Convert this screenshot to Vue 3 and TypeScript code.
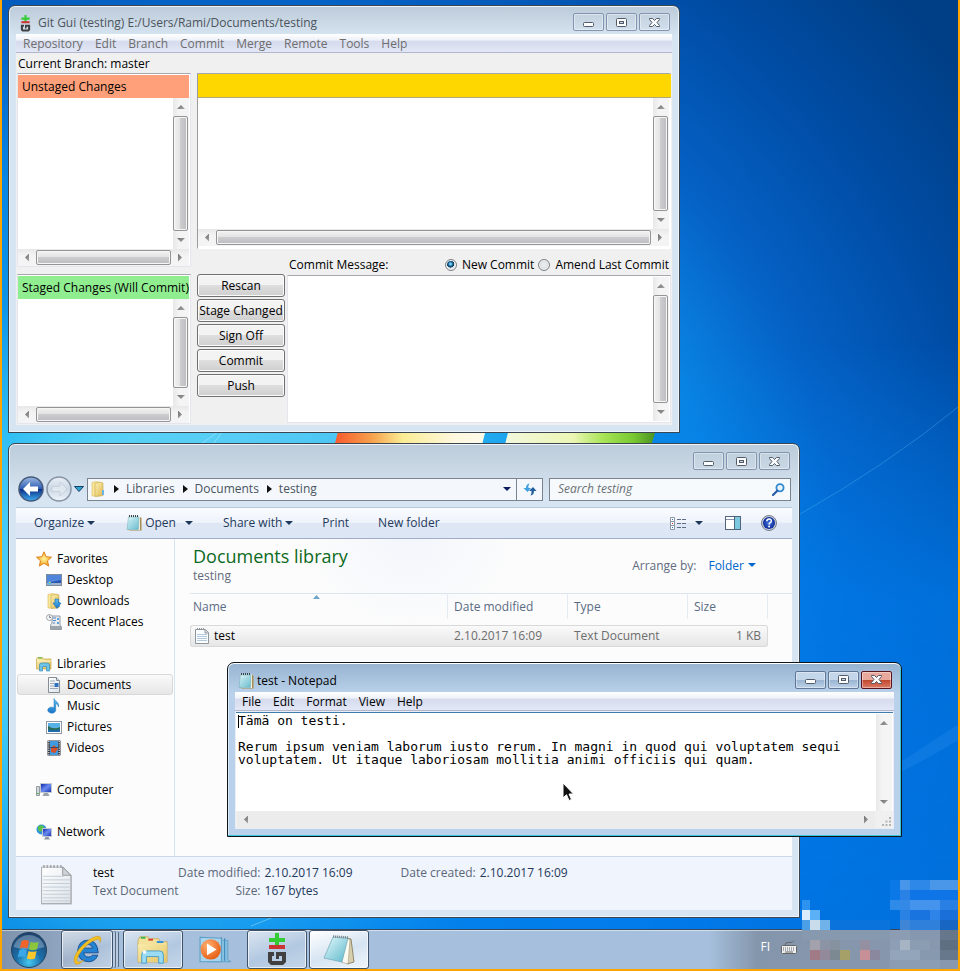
<script setup lang="ts">
import { ref } from 'vue'

interface NavItem { label: string; icon: string; selected?: boolean }
interface NavGroup { head: NavItem; items: NavItem[] }

const gitMenus = ['Repository', 'Edit', 'Branch', 'Commit', 'Merge', 'Remote', 'Tools', 'Help']
const gitActions = ['Rescan', 'Stage Changed', 'Sign Off', 'Commit', 'Push']
const noteMenus = ['File', 'Edit', 'Format', 'View', 'Help']
const captions = [
  { name: 'Minimize', icon: 'cap-min' },
  { name: 'Maximize', icon: 'cap-max' },
  { name: 'Close', icon: 'cap-close' },
]
const crumbs = ['Libraries', 'Documents', 'testing']

const nav: NavGroup[] = [
  {
    head: { label: 'Favorites', icon: 'star' },
    items: [
      { label: 'Desktop', icon: 'desktop' },
      { label: 'Downloads', icon: 'downloads' },
      { label: 'Recent Places', icon: 'recent' },
    ],
  },
  {
    head: { label: 'Libraries', icon: 'libraries' },
    items: [
      { label: 'Documents', icon: 'document', selected: true },
      { label: 'Music', icon: 'music' },
      { label: 'Pictures', icon: 'pictures' },
      { label: 'Videos', icon: 'videos' },
    ],
  },
  { head: { label: 'Computer', icon: 'computer' }, items: [] },
  { head: { label: 'Network', icon: 'network' }, items: [] },
]

const commitMode = ref('new')
const commitMessage = ref('')
const search = ref('')
const noteText = ref(
  'Tämä on testi.\n\nRerum ipsum veniam laborum iusto rerum. In magni in quod qui voluptatem sequi\nvoluptatem. Ut itaque laboriosam mollitia animi officiis qui quam.',
)

/* Mosaic tiles over the clock corner: column, row, width in tiles, colour. */
const tiles: [number, number, number, string][] = [
  [0, 0, 1, '#2d93f0'], [0, 1, 1, '#d9ecfb'], [1, 1, 1, '#5cb0f5'],
  [0, 2, 1, '#4a9fe6'], [1, 2, 1, '#c9dcec'], [2, 2, 1, '#6fb3ea'], [3, 2, 6, '#0a74dc'],
  [9, -2, 1, '#0b78e8'], [10, -2, 1, '#4796e9'], [11, -2, 2, '#2e88e8'], [13, -2, 2, '#4a97ea'],
  [9, -1, 1, '#0b78e8'], [10, -1, 1, '#2a82e6'], [11, -1, 4, '#0f74e6'],
  [9, 0, 1, '#2f8bea'], [10, 0, 1, '#3488e6'], [11, 0, 3, '#4493ec'], [14, 0, 1, '#2a7fe4'],
  [10, 1, 1, '#2a82e4'], [11, 1, 2, '#1a74e0'], [13, 1, 1, '#2e84e8'], [14, 1, 1, '#1a70d8'],
  [10, 2, 1, '#3f87d6'], [11, 2, 3, '#2f80da'], [14, 2, 1, '#1766c4'],
  [0, 3, 9, '#8799af'], [9, 3, 2, '#8c9db3'], [11, 3, 3, '#8598b0'], [14, 3, 1, '#66768b'],
  [1, 4, 1, '#a3a1ac'], [2, 4, 1, '#8c93a5'], [3, 4, 1, '#86929f'], [6, 4, 1, '#9590a1'],
  [9, 4, 1, '#8d9fb6'], [10, 4, 1, '#a6b4c3'], [11, 4, 2, '#8b9db3'], [14, 4, 1, '#5f6f82'],
  [1, 5, 1, '#a07a85'], [2, 5, 1, '#92899a'], [3, 5, 1, '#7c8992'], [4, 5, 1, '#a5a068'],
  [6, 5, 1, '#c69096'], [7, 5, 1, '#8a889f'], [9, 5, 3, '#93a5ba'], [12, 5, 2, '#8799af'], [14, 5, 1, '#68788c'],
  [9, 6, 5, '#8b9db3'],
]
</script>

<template>
  <div class="desktop">
    <svg class="sprites" aria-hidden="true">
      <defs>
        <linearGradient id="gFolder" x1="0" y1="0" x2="1" y2="1">
          <stop offset="0" stop-color="#fbf0b4" /><stop offset="1" stop-color="#dfb952" />
        </linearGradient>
        <linearGradient id="gNote" x1="0" y1="0" x2="1" y2="1">
          <stop offset="0" stop-color="#e6fafc" /><stop offset="1" stop-color="#5bb7cb" />
        </linearGradient>
        <linearGradient id="gBlue" x1="0" y1="0" x2="0" y2="1">
          <stop offset="0" stop-color="#5fc4f2" /><stop offset="1" stop-color="#1874c8" />
        </linearGradient>
        <linearGradient id="gScreen" x1="0" y1="0" x2="1" y2="1">
          <stop offset="0" stop-color="#0a1ea8" /><stop offset="0.5" stop-color="#6a8cf0" /><stop offset="1" stop-color="#1428b0" />
        </linearGradient>
        <linearGradient id="gBack" x1="0" y1="0" x2="0" y2="1">
          <stop offset="0" stop-color="#9db9e2" /><stop offset="0.48" stop-color="#2f5fb4" />
          <stop offset="0.52" stop-color="#0b2f86" /><stop offset="1" stop-color="#3fb0f4" />
        </linearGradient>
        <linearGradient id="gFwd" x1="0" y1="0" x2="0" y2="1">
          <stop offset="0" stop-color="#e9eff6" /><stop offset="0.5" stop-color="#cbd8e6" /><stop offset="1" stop-color="#eef4fa" />
        </linearGradient>
        <linearGradient id="gPaper" x1="0" y1="0" x2="1" y2="1">
          <stop offset="0" stop-color="#ffffff" /><stop offset="1" stop-color="#dfe3e8" />
        </linearGradient>
        <radialGradient id="gHelp"><stop offset="0" stop-color="#4a7be6" /><stop offset="1" stop-color="#0b2a96" /></radialGradient>
        <radialGradient id="gStar"><stop offset="0" stop-color="#fff6a0" /><stop offset="1" stop-color="#f8a21c" /></radialGradient>
        <radialGradient id="gOrb" cx="0.5" cy="0.85" r="0.8">
          <stop offset="0" stop-color="#46c8f0" /><stop offset="0.45" stop-color="#1b6ea8" /><stop offset="1" stop-color="#1c4470" />
        </radialGradient>
        <radialGradient id="gPlay" cx="0.35" cy="0.3" r="0.8"><stop offset="0" stop-color="#ffb070" /><stop offset="1" stop-color="#e4560c" /></radialGradient>
      </defs>

      <symbol id="cap-min" viewBox="0 0 11 11"><rect x="0.5" y="5.5" width="10" height="4" rx="1" fill="#fbfcfd" stroke="#535a68" /></symbol>
      <symbol id="cap-max" viewBox="0 0 11 11">
        <rect x="0.5" y="1.5" width="10" height="8" rx="1" fill="#fbfcfd" stroke="#535a68" />
        <rect x="3.5" y="4.5" width="4" height="2" fill="#c9d5e2" stroke="#535a68" />
      </symbol>
      <symbol id="cap-close" viewBox="0 0 11 11">
        <path d="M0.5 1.5h3l2 2 2-2h3v1L8 5.500 10.500 8.500v1h-3l-2-2-2 2h-3v-1L3 5.500 0.500 2.500z" fill="#fbfcfd" stroke="#535a68" stroke-linejoin="round" />
      </symbol>
      <symbol id="down" viewBox="0 0 8 4"><path d="M0 0h8L4 4z" fill="currentColor" /></symbol>

      <symbol id="git" viewBox="0 0 20 33">
        <path d="M2 5h6V0h4v5h6v4h-6v4H8V9H2z" fill="#33cc33" />
        <path d="M2 12h16v4H2z" fill="#cc3333" />
        <path d="M1 19h6v4H5v5h10v-5h-3v3H9v-7h10v10l-3 3H4l-3-3z" fill="#404040" />
      </symbol>
      <symbol id="notepad" viewBox="0 0 16 16">
        <path d="M14 2l1.500 1v12.500H4l-2-1z" fill="#a98c4e" />
        <path d="M2.500 1.500H14V15H3z" fill="#f8f6e8" />
        <path d="M2.500 2H13l-.5 12.500H1z" fill="url(#gNote)" stroke="#6fa9b5" stroke-width=".5" />
        <path d="M3 6h9M3 8h9M2.500 10h9.500M2.500 12h9" stroke="#9fd3dc" stroke-width=".5" />
        <path d="M3 1h10" stroke="#38464c" stroke-width="2" stroke-dasharray="1 1" />
      </symbol>
      <symbol id="folder" viewBox="0 0 16 16">
        <path d="M2 1.500l4-1 4 1V15H2z" fill="#f8e79c" stroke="#d9b855" stroke-width=".6" />
        <path d="M5 2.500l5-1.500 3 1v12.500l-8 1z" fill="url(#gFolder)" stroke="#c9a444" stroke-width=".6" />
        <path d="M12 9h2v5h-2z" fill="#6cb4e6" />
      </symbol>
      <symbol id="star" viewBox="0 0 16 16">
        <path d="M8 .8l2.200 4.900 5.300.500-4 3.600 1.200 5.300L8 12.300l-4.700 2.800 1.200-5.300-4-3.600 5.300-.5z" fill="url(#gStar)" stroke="#d97a14" stroke-width=".9" />
      </symbol>
      <symbol id="desktop" viewBox="0 0 16 16">
        <rect x="0.500" y="2.500" width="15" height="11" fill="#2a55b0" stroke="#7e8c9c" />
        <path d="M1 3h14v5L1 11z" fill="#4f86dc" /><path d="M1 11h14v2H1z" fill="#9fb4cc" />
        <circle cx="3.500" cy="11" r="1.700" fill="#48b6e8" /><path d="M3 10h1.500v1H3z" fill="#f6c531" />
      </symbol>
      <symbol id="downloads" viewBox="0 0 16 16">
        <use href="#folder" /><path d="M9 6h3.500v4H15l-4 5.500L7 10h2z" fill="url(#gBlue)" stroke="#1666b4" stroke-width=".6" />
      </symbol>
      <symbol id="recent" viewBox="0 0 16 16">
        <path d="M6 2h8v9l1.500 2v2.500h-11V11L6 9z" fill="#e8ebee" stroke="#7f8890" stroke-width=".8" />
        <path d="M5 12h10v3H5z" fill="#9da5ac" />
        <path d="M7 4h3M7 6.500h3M7 9h2" stroke="#4a86c8" /><path d="M11 4h2v2h-2zM11 8h2v2h-2z" fill="#5fa2dc" />
        <circle cx="3.500" cy="3.500" r="3" fill="#f4f6f8" stroke="#8b949c" stroke-width=".8" /><path d="M3.500 1.500v2H5" stroke="#566" fill="none" stroke-width=".8" />
      </symbol>
      <symbol id="libraries" viewBox="0 0 16 16">
        <path d="M.5 3l1-1.500h5L7.500 3h7.500v10H.500z" fill="url(#gFolder)" stroke="#c9a444" stroke-width=".7" />
        <path d="M2 2h4" stroke="#46b83c" /><path d="M1 5h14" stroke="#fff6c8" />
        <path d="M3.500 15V9q0-2 2-2h6q2 0 2 2v6h-3v-4.500h-4V15z" fill="#6cc4e8" stroke="#3a8cb8" stroke-width=".7" />
      </symbol>
      <symbol id="document" viewBox="0 0 16 16">
        <path d="M2.500.5h8l3 3v12h-11z" fill="url(#gPaper)" stroke="#858d96" /><path d="M10.500.5v3h3" fill="#dde2e8" stroke="#858d96" />
        <path d="M4 4h5M4 6.500h4M4 9h4M4 11.500h8" stroke="#9aa8b8" /><path d="M8.500 6h4v4h-4z" fill="#2e6fc0" />
      </symbol>
      <symbol id="music" viewBox="0 0 16 16">
        <path d="M8 .5c1 3 5.500 3.500 4.500 8.500-.4-2-1.500-3-2.800-3.400v6.400A4 3 0 1 1 8 9.700z" fill="url(#gBlue)" stroke="#1c70b8" stroke-width=".5" />
      </symbol>
      <symbol id="pictures" viewBox="0 0 16 16">
        <rect x=".5" y="2.500" width="15" height="12" fill="#fff" stroke="#8f98a2" /><path d="M2 4h12v9H2z" fill="#57b0e6" />
        <path d="M2 7q6 4 12 1v5H2z" fill="#2b6d52" /><path d="M2 10q5 2 12 0v3H2z" fill="#1d6ba8" />
      </symbol>
      <symbol id="videos" viewBox="0 0 16 16">
        <path d="M1.500.5h13v15h-13z" fill="#2c323c" /><path d="M4 1h8v14H4z" fill="#3f9be0" />
        <path d="M5 8l3-3 4 4-3 4-4-1z" fill="#d4532c" /><path d="M4 7.500h8" stroke="#1d3f6a" stroke-width=".8" />
        <path d="M2.800 1v14M13.200 1v14" stroke="#e8edf2" stroke-width="1.200" stroke-dasharray="1.200 1" />
      </symbol>
      <symbol id="computer" viewBox="0 0 16 16">
        <path d="M.5 4.500h3v9h-3z" fill="#d3d8dc" stroke="#6f7880" stroke-width=".7" /><path d="M1 11h2v1H1z" fill="#45c03c" />
        <path d="M4.500 1.500h11v9h-11z" fill="url(#gScreen)" stroke="#c3cad2" /><path d="M8 11h4l1.500 3h-7z" fill="#9aa3ac" />
      </symbol>
      <symbol id="network" viewBox="0 0 16 16">
        <circle cx="5.500" cy="5.500" r="5" fill="#2e92e0" /><path d="M2 2.500q3-2.500 6 0L7 6 4 8 2 6z" fill="#59c04a" />
        <path d="M6.500 4.500h9v8h-9z" fill="url(#gScreen)" stroke="#c3cad2" /><path d="M9.500 13h3l1.500 2.500H8z" fill="#8d98a4" />
      </symbol>
      <symbol id="sheet" viewBox="0 0 32 40">
        <path d="M1 3.500h22l8 8V39.500H1z" fill="#b9bdc1" /><path d="M1.500 3h21l7.500 8v27.500H1.500z" fill="url(#gPaper)" stroke="#9fa4a9" stroke-width=".8" />
        <path d="M3 12h20M3 15.500h26M3 19h26M3 22.500h26M3 26h26M3 29.500h26M3 33h26M3 36h26" stroke="#b8c6d4" stroke-width=".8" />
        <path d="M22 3v8h8z" fill="#cfd3d7" stroke="#8a8f94" stroke-width=".8" />
        <path d="M3 2.500h19" stroke="#a3a8ad" stroke-width="3" stroke-dasharray="1.500 1.800" />
      </symbol>
      <symbol id="sheet-small" viewBox="0 0 14 16">
        <path d="M.5 1.500h10l3 3v11H.5z" fill="#fcfdfe" stroke="#8f969c" /><path d="M10 1.500v3.500h3.500" fill="#dfe3e6" stroke="#8f969c" />
        <path d="M2 6.500h10M2 8.500h10M2 10.500h10M2 12.500h10" stroke="#b2c8dc" /><path d="M2 1h8" stroke="#8f969c" stroke-width="2" stroke-dasharray="1 1" />
      </symbol>
      <symbol id="view" viewBox="0 0 16 13">
        <path d="M.5.500h4v12h-4zM.5 4.500h4M.5 8.500h4" fill="#fff" stroke="#8b97a6" />
        <path d="M2 2h1v1H2zM2 10h1v1H2z" fill="#2a6ac0" /><path d="M2 6h1v1H2z" fill="#d02020" />
        <path d="M7 2.500h4M12 2.500h4M7 6.500h4M12 6.500h4M7 10.500h4M12 10.500h4" stroke="#5d6f86" />
      </symbol>
      <symbol id="preview" viewBox="0 0 16 14">
        <rect x=".5" y=".5" width="15" height="13" fill="#fff" stroke="#50647c" /><path d="M1 3.500h9" stroke="#8797ab" />
        <path d="M10 1h5v12h-5z" fill="#7cc8de" /><path d="M9.500 1v12" stroke="#50647c" />
      </symbol>
      <symbol id="refresh" viewBox="0 0 14 13">
        <path d="M6.500.5Q3 1 3 5H.500l4 4 3.500-4H5.500Q5 2.500 6.500.5z" fill="#3ea0de" />
        <path d="M7.500 12.500Q11 12 11 8h2.500l-3.500-4-4 4h2.500q.5 2.500-1 4.500z" fill="#245e9e" />
      </symbol>
      <symbol id="search" viewBox="0 0 13 13">
        <circle cx="8" cy="4.800" r="3.600" fill="#e8f4fc" stroke="#3388cc" stroke-width="1.800" /><path d="M5.300 7.700L1 12" stroke="#2a5ca8" stroke-width="2.200" stroke-linecap="round" />
      </symbol>
      <symbol id="help" viewBox="0 0 16 16">
        <circle cx="8" cy="8" r="7.500" fill="#c6ccd6" stroke="#767f90" /><circle cx="8" cy="8" r="6" fill="url(#gHelp)" />
        <path d="M5.800 6.300Q5.900 4 8.100 4T10.300 6Q10.300 7.200 9 7.900 8.100 8.400 8.100 9.500" fill="none" stroke="#fff" stroke-width="1.500" /><circle cx="8.100" cy="11.600" r="1" fill="#fff" />
      </symbol>

      <symbol id="tb-start" viewBox="0 0 36 36">
        <circle cx="18" cy="18" r="17.500" fill="url(#gOrb)" stroke="#26435f" />
        <path d="M2.500 15A16 16 0 0 1 33.500 15Q18 20 2.500 15z" fill="#fff" opacity=".28" />
        <path d="M10.500 9q4-2 7.500 0l-1.700 7.500q-4-2-7.500 0z" fill="#f0642a" /><path d="M19.500 9.700q4 1.800 8.200 0L26 17.300q-4 1.800-8 0z" fill="#8cc63c" />
        <path d="M8.400 18q4-2 7.500 0l-1.700 7.600q-4-2-7.500 0z" fill="#3aa8e8" /><path d="M17.600 18.900q4 1.800 8 0l-1.700 7.500q-4 1.800-8 0z" fill="#fcc82c" />
      </symbol>
      <symbol id="tb-ie" viewBox="0 0 32 32">
        <path d="M28 19H12.500q.8 4.500 5 4.500 2.800 0 4.300-2h5.700Q25 28.500 17.500 28.500 6.500 28 6 17 7 5.500 17 5.500T28 19zM12.500 14h9.500Q21 10 17.300 10T12.500 14z" fill="#2483d2" stroke="#0f4688" stroke-width=".9" />
        <path d="M4 31Q-1 26 8 14.500 18 3 26 1.500 33 .5 30 8q0-4.500-4.500-3Q18 7.500 10.500 16.500 2.500 27 6.500 28.500 9 29.500 13 26 8 32 4 31z" fill="#f4c020" stroke="#c98f0c" stroke-width=".5" />
      </symbol>
      <symbol id="tb-explorer" viewBox="0 0 34 30">
        <path d="M1 5l2-4h9l2 4 1-2h8l2 4 7-1v22H1z" fill="#f4e29a" stroke="#c5a75a" stroke-width=".8" />
        <path d="M4 2h5" stroke="#3bb54a" stroke-width="2" /><path d="M12 4h5" stroke="#d8402c" stroke-width="2" /><path d="M21 6.500h7" stroke="#2a8fe0" stroke-width="2" />
        <path d="M1 9h31v18H1z" fill="url(#gFolder)" opacity=".7" />
        <path d="M5 29v-9q0-4 4-4h15q4 0 4 4v9h-5v-7H10v7z" fill="#9adcf4" stroke="#4a9cc4" />
        <circle cx="8" cy="17" r="2" fill="#fff" opacity=".9" />
      </symbol>
      <symbol id="tb-media" viewBox="0 0 30 26">
        <path d="M8 3l19 1v18l3 2H8z" fill="#86c0e0" stroke="#4b93bf" stroke-width=".6" /><path d="M24 2v21M21 1v22" stroke="#3f8abb" />
        <path d="M1 1l20 1v22H1z" fill="#a9d4ec" stroke="#5b9fc8" />
        <circle cx="11" cy="12.500" r="9.500" fill="url(#gPlay)" /><path d="M7.500 7l9 5.500-9 5.500z" fill="#fff" />
      </symbol>
      <symbol id="tb-notepad" viewBox="0 0 32 30">
        <path d="M24 3l4 1 3 23-7 2z" fill="#d8cfae" stroke="#7d7250" stroke-width=".8" /><path d="M24 3l3 2-2 24-7-2z" fill="#fbfaf0" stroke="#958b68" stroke-width=".5" />
        <path d="M10 2l15 1-6 24L1 23z" fill="url(#gNote)" stroke="#5f9eae" stroke-width=".6" /><path d="M10 1.500l15 1" stroke="#7f8f96" stroke-width="2.500" stroke-dasharray="1.200 .8" />
      </symbol>
    </svg>

    <svg class="wallpaper" viewBox="0 0 960 971" preserveAspectRatio="none" aria-hidden="true">
      <defs>
        <radialGradient id="sky" gradientUnits="userSpaceOnUse" cx="240" cy="610" r="900">
          <stop offset="0" stop-color="#8ae8fb" /><stop offset="0.24" stop-color="#5ad6f7" /><stop offset="0.33" stop-color="#2fbdf3" />
          <stop offset="0.43" stop-color="#0f94e8" /><stop offset="0.55" stop-color="#0a85e4" /><stop offset="0.68" stop-color="#0562c6" />
          <stop offset="0.84" stop-color="#004da6" /><stop offset="1" stop-color="#003f86" />
        </radialGradient>
        <linearGradient id="floor" x1="0" y1="0" x2="0" y2="1">
          <stop offset="0.35" stop-color="#0078e4" stop-opacity="0" /><stop offset="0.62" stop-color="#007cec" stop-opacity="0.7" /><stop offset="1" stop-color="#007aec" stop-opacity="0.8" />
        </linearGradient>
        <linearGradient id="floorMask" x1="0" y1="0" x2="1" y2="0">
          <stop offset="0" stop-color="#000" /><stop offset="0.5" stop-color="#fff" />
        </linearGradient>
        <mask id="floorFade"><rect width="960" height="971" fill="url(#floorMask)" /></mask>
        <linearGradient id="flagWarm" x1="0" y1="0" x2="1" y2="0">
          <stop offset="0" stop-color="#f8592c" /><stop offset="0.25" stop-color="#f6a24e" /><stop offset="0.45" stop-color="#fbec94" /><stop offset="0.8" stop-color="#fef8e0" /><stop offset="1" stop-color="#fffbea" />
        </linearGradient>
        <linearGradient id="flagGreen" x1="0" y1="0" x2="1" y2="0">
          <stop offset="0" stop-color="#f2f8dc" /><stop offset="0.45" stop-color="#ecf6b4" /><stop offset="0.65" stop-color="#a8e456" /><stop offset="0.85" stop-color="#78c832" /><stop offset="1" stop-color="#4a9020" />
        </linearGradient>
      </defs>
      <rect width="960" height="971" fill="url(#sky)" />
      <rect width="960" height="971" fill="url(#floor)" mask="url(#floorFade)" />
      <path d="M338 430h148l-4 16H334z" fill="url(#flagWarm)" />
      <path d="M509 430h148l-5 16H505z" fill="url(#flagGreen)" />
      <path d="M800 516Q890 465 960 408" stroke="#4fb4f4" stroke-opacity=".4" fill="none" />
      <path d="M900 775Q930 760 960 742L960 726 900 765z" fill="#3a9cf4" opacity=".2" />
      <path d="M200 445l22-16M212 445l12-16M250 928l30-12" stroke="#c8f4ff" stroke-opacity=".4" />
    </svg>

    <main class="workspace">
      <section class="window git" aria-label="Git Gui">
        <header class="titlebar">
          <svg class="git-ico"><use href="#git" /></svg>
          <h1 class="title faded">Git Gui (testing) E:/Users/Rami/Documents/testing</h1>
          <div class="captions">
            <button v-for="c in captions" :key="c.name" type="button" class="cap" :aria-label="c.name"><svg><use :href="'#' + c.icon" /></svg></button>
          </div>
        </header>
        <div class="client">
          <nav class="menubar faded-menu"><button v-for="m in gitMenus" :key="m" type="button">{{ m }}</button></nav>
          <p class="branch">Current Branch: <span>master</span></p>
          <div class="git-grid">
            <div class="git-left">
              <section class="pane unstaged">
                <h2 class="pane-head salmon">Unstaged Changes</h2>
                <div class="pane-body"><div class="list"></div><div class="sb v"><i class="arr up"></i><b class="thumb"></b><i class="arr dn"></i></div></div>
                <div class="sb h"><i class="arr lf"></i><b class="thumb"></b><i class="arr rt"></i></div>
              </section>
              <section class="pane staged">
                <h2 class="pane-head green">Staged Changes (Will Commit)</h2>
                <div class="pane-body"><div class="list"></div><div class="sb v"><i class="arr up"></i><b class="thumb"></b><i class="arr dn"></i></div></div>
                <div class="sb h"><i class="arr lf"></i><b class="thumb"></b><i class="arr rt"></i></div>
              </section>
            </div>
            <div class="git-right">
              <section class="diff">
                <div class="diff-head"></div>
                <div class="pane-body"><div class="list"></div><div class="sb v"><i class="arr up"></i><b class="thumb"></b><i class="arr dn"></i></div></div>
                <div class="sb h"><i class="arr lf"></i><b class="thumb"></b><i class="arr rt"></i></div>
              </section>
              <div class="commit-area">
                <div class="actions"><button v-for="a in gitActions" :key="a" type="button" class="push">{{ a }}</button></div>
                <div class="commit">
                  <div class="commit-head">
                    <label for="msg">Commit Message:</label>
                    <label class="radio"><input v-model="commitMode" type="radio" name="mode" value="new" />New Commit</label>
                    <label class="radio"><input v-model="commitMode" type="radio" name="mode" value="amend" />Amend Last Commit</label>
                  </div>
                  <div class="commit-box">
                    <textarea id="msg" v-model="commitMessage"></textarea>
                    <div class="sb v"><i class="arr up"></i><b class="thumb"></b><i class="arr dn"></i></div>
                  </div>
                </div>
              </div>
            </div>
          </div>
        </div>
      </section>

      <section class="window explorer" aria-label="Explorer">
        <header class="titlebar bare">
          <div class="captions">
            <button v-for="c in captions" :key="c.name" type="button" class="cap" :aria-label="c.name"><svg><use :href="'#' + c.icon" /></svg></button>
          </div>
        </header>
        <div class="addressbar">
          <div class="travel">
            <button type="button" class="round" aria-label="Back">
              <svg viewBox="0 0 26 26"><circle cx="13" cy="13" r="12" fill="url(#gBack)" stroke="#45597a" stroke-width="1.500" /><path d="M5 13l7-7v4.500h8v5h-8V20z" fill="#fff" /></svg>
            </button>
            <button type="button" class="round" aria-label="Forward">
              <svg viewBox="0 0 26 26"><circle cx="13" cy="13" r="12" fill="url(#gFwd)" stroke="#8793a3" stroke-width="1.500" /><path d="M21 13l-7-7v4.500H6v5h8V20z" fill="#dfe7ef" stroke="#b9c6d4" stroke-width=".6" /></svg>
            </button>
            <svg class="hist" viewBox="0 0 10 6"><path d="M.5.5h9L5 5.500z" fill="#2ea3d0" stroke="#14406a" /></svg>
          </div>
          <div class="crumbs">
            <svg class="i16"><use href="#folder" /></svg>
            <template v-for="c in crumbs" :key="c"><i class="tri"></i><a href="#">{{ c }}</a></template>
            <button type="button" class="drop" aria-label="Previous locations"><svg class="dn8"><use href="#down" /></svg></button>
            <button type="button" class="reload" aria-label="Refresh"><svg><use href="#refresh" /></svg></button>
          </div>
          <label class="searchbox">
            <input v-model="search" type="text" placeholder="Search testing" aria-label="Search testing" />
            <svg><use href="#search" /></svg>
          </label>
        </div>
        <div class="client ex-client">
          <div class="toolbar">
            <button type="button" class="t-org">Organize <svg class="dn8"><use href="#down" /></svg></button>
            <button type="button" class="t-open"><svg class="i16"><use href="#notepad" /></svg>Open <svg class="dn8 far"><use href="#down" /></svg></button>
            <button type="button" class="t-share">Share with <svg class="dn8"><use href="#down" /></svg></button>
            <button type="button" class="t-print">Print</button>
            <button type="button" class="t-new">New folder</button>
            <span class="spacer"></span>
            <button type="button" class="t-view" aria-label="Change your view"><svg class="vw"><use href="#view" /></svg><svg class="dn8 far"><use href="#down" /></svg></button>
            <button type="button" class="t-prev" aria-label="Show the preview pane"><svg class="pv"><use href="#preview" /></svg></button>
            <button type="button" class="t-help" aria-label="Help"><svg class="i16"><use href="#help" /></svg></button>
          </div>
          <div class="ex-body">
            <nav class="sidebar">
              <ul v-for="g in nav" :key="g.head.label">
                <li><a href="#" class="nav-head"><svg class="i16"><use :href="'#' + g.head.icon" /></svg>{{ g.head.label }}</a></li>
                <li v-for="n in g.items" :key="n.label"><a href="#" :class="{ selected: n.selected }"><svg class="i16"><use :href="'#' + n.icon" /></svg>{{ n.label }}</a></li>
              </ul>
            </nav>
            <div class="files">
              <div class="lib-head">
                <div><h2>Documents library</h2><p>testing</p></div>
                <div class="arrange"><span>Arrange by:</span><button type="button">Folder <svg class="dn8"><use href="#down" /></svg></button></div>
              </div>
              <table>
                <colgroup><col /><col class="c-date" /><col class="c-type" /><col class="c-size" /><col class="c-rest" /></colgroup>
                <thead><tr><th>Name<svg class="sort" viewBox="0 0 7 4"><path d="M0 4l3.500-4L7 4z" fill="#6fa4c8" /></svg></th><th>Date modified</th><th>Type</th><th>Size</th><th></th></tr></thead>
                <tbody><tr><td><span class="file"><svg class="sheet16"><use href="#sheet-small" /></svg>test</span></td><td>2.10.2017 16:09</td><td>Text Document</td><td class="num">1 KB</td><td></td></tr></tbody>
              </table>
            </div>
          </div>
          <footer class="details">
            <svg class="sheet"><use href="#sheet" /></svg>
            <div class="d-name"><strong>test</strong><span>Text Document</span></div>
            <dl><dt>Date modified:</dt><dd>2.10.2017 16:09</dd><dt>Size:</dt><dd>167 bytes</dd></dl>
            <dl class="d-created"><dt>Date created:</dt><dd>2.10.2017 16:09</dd></dl>
          </footer>
        </div>
      </section>

      <section class="window notepad" aria-label="Notepad">
        <header class="titlebar">
          <svg class="i16"><use href="#notepad" /></svg>
          <h1 class="title">test - Notepad</h1>
          <div class="captions">
            <button v-for="c in captions" :key="c.name" type="button" class="cap" :class="{ red: c.name === 'Close' }" :aria-label="c.name"><svg><use :href="'#' + c.icon" /></svg></button>
          </div>
        </header>
        <div class="client np-client">
          <nav class="menubar"><button v-for="m in noteMenus" :key="m" type="button">{{ m }}</button></nav>
          <div class="edit">
            <div class="edit-main">
              <textarea v-model="noteText" aria-label="Text" spellcheck="false"></textarea>
              <i class="caret"></i>
              <div class="sb v flat"><i class="arr up"></i><b class="gap"></b><i class="arr dn"></i></div>
            </div>
            <div class="edit-foot">
              <div class="sb h flat"><i class="arr lf"></i><b class="gap"></b><i class="arr rt"></i></div>
              <svg class="grip" viewBox="0 0 9 9"><path d="M7 0h2v2H7zM3.500 3.500h2v2h-2zM7 3.500h2v2H7zM0 7h2v2H0zM3.500 7h2v2h-2zM7 7h2v2H7z" fill="#b4b4b4" /></svg>
            </div>
          </div>
        </div>
        <svg class="cursor" viewBox="0 0 13 20"><path d="M1 1v15l3.500-3.300L7 18.500l2.500-1L7 12h4.500z" fill="#111" stroke="#fff" /></svg>
      </section>
    </main>

    <footer class="taskbar">
      <button type="button" class="start" aria-label="Start"><svg><use href="#tb-start" /></svg></button>
      <button type="button" class="task stacked" aria-label="Internet Explorer"><svg><use href="#tb-ie" /></svg></button>
      <button type="button" class="task wide" aria-label="Explorer"><svg><use href="#tb-explorer" /></svg></button>
      <button type="button" class="task wide plain" aria-label="Media Player"><svg><use href="#tb-media" /></svg></button>
      <button type="button" class="task wide" aria-label="Git Gui"><svg class="tb-git"><use href="#git" /></svg></button>
      <button type="button" class="task wide active" aria-label="Notepad"><svg><use href="#tb-notepad" /></svg></button>
      <div class="tray">
        <span>FI</span>
        <svg class="keys" viewBox="0 0 16 14"><path d="M4 5q0-3 4-2.500T13 .5" fill="none" stroke="#666" /><rect x=".5" y="5.500" width="15" height="8" rx="1" fill="#eef0f2" stroke="#666" /><path d="M2 8h12M2 10h12" stroke="#666" stroke-dasharray="1 1" /><path d="M4 12h8" stroke="#666" /></svg>
      </div>
    </footer>
    <svg class="mosaic" viewBox="0 -20 156 89" aria-hidden="true">
      <rect v-for="(t, i) in tiles" :key="i" :x="t[0] * 10 - (t[0] > 0 ? 2 : 0)" :y="t[1] * 10" :width="t[2] * 10 + (t[0] + t[2] === 15 ? 8 : t[0] === 0 ? -2 : 0)" height="10" :fill="t[3]" />
    </svg>
  </div>
</template>

<style>
body { margin: 0; }
</style>

<style scoped>
.desktop {
  position: relative; box-sizing: border-box; min-height: 100vh; display: flex; flex-direction: column;
  border: 2px solid #ffa500; border-top: 0; overflow: hidden; background: #0a7fe4;
  font: 12px/16px "Open Sans", "Noto Sans", sans-serif; color: #000;
}
.desktop * { box-sizing: border-box; }
.sprites { position: absolute; width: 0; height: 0; }
.wallpaper { position: absolute; inset: 0; width: 100%; height: 100%; }
button { font: inherit; color: inherit; background: none; border: 0; padding: 0; margin: 0; white-space: nowrap; }
a { color: inherit; text-decoration: none; }
h1, h2, p, ul, dl, dd { margin: 0; padding: 0; font: inherit; }
svg { display: block; flex: none; }
.i16 { width: 16px; height: 16px; }
.dn8 { width: 8px; height: 4px; display: inline-block; }
.workspace { position: relative; flex: 1; min-height: 920px; }

.window {
  position: absolute; border: 1px solid #3b4650; border-radius: 7px 7px 0 0; padding: 0 7px 7px;
  background: linear-gradient(#bccbd9, #d7e4f1 30px); box-shadow: inset 0 0 0 1px #eef4f9;
}
.git { left: 6px; right: 278px; top: 5px; }
.explorer { left: 6px; right: 158px; top: 443px; background: linear-gradient(#bccbd9, #d7e4f1 50px); }
.notepad { left: 225px; right: 56px; top: 662px; border-color: #10151a; background: linear-gradient(#96b3d0, #b9d1ea 30px); box-shadow: inset 0 1px 0 #fff, inset -1px -1px 0 #3cc4d8, inset 1px 0 0 #dceaf6; }
.titlebar { display: flex; align-items: center; height: 28px; padding: 6px 2px 0 3px; gap: 6px; }
.notepad .titlebar { height: 29px; gap: 3px; }
.titlebar.bare { height: 30px; align-items: flex-start; padding-top: 8px; }
.title { flex: 1; white-space: nowrap; overflow: hidden; }
.faded { color: #4c545c; }
.git-ico { width: 13px; height: 17px; }
.captions { display: flex; gap: 2px; margin-left: auto; }
.cap {
  width: 31px; height: 18px; display: grid; place-items: center; border: 1px solid #8395ae; border-radius: 2px;
  box-shadow: inset 0 0 0 1px rgba(255, 255, 255, 0.4);
}
.git .captions { margin-top: -2px; }
.notepad .captions { margin-top: -2px; }
.cap svg { width: 11px; height: 11px; }
.notepad .cap { border-color: #5f7796; background: linear-gradient(#c3d6ea 48%, #98b3d0 50%, #bcd2e8); }
.notepad .cap.red { border-color: #5a1420; background: linear-gradient(#e8a99c 48%, #c1452c 50%, #dc7c66); }
.client { background: #f0f0f0; }

.menubar { display: flex; height: 19px; padding: 0 1px; background: linear-gradient(#fff, #eef1f8 35%, #d5dbed 38%, #e3e7f6); border-bottom: 1px solid #b2b6ce; }
.menubar button { padding: 0 6px; line-height: 20px; }
.faded-menu { color: #6d6d6d; }

.branch { padding: 3px 2px 1px; height: 20px; }
.git-grid { display: flex; gap: 6px; padding: 0 1px 1px; }
.git-left { width: 174px; display: flex; flex-direction: column; gap: 7px; }
.git-right { flex: 1; min-width: 0; display: flex; flex-direction: column; gap: 6px; }
.pane { display: flex; flex-direction: column; background: #fff; border: 1px solid #e3e6ea; border-top-color: #a6a8ae; padding: 1px 1px 0 0; }
.pane-head { height: 23px; line-height: 23px; padding-left: 4px; white-space: nowrap; overflow: hidden; }
.salmon { background: #ffa07a; }
.green { background: #90ee90; }
.pane-body { display: flex; flex: 1; }
.list { flex: 1; background: #fff; }
.unstaged { min-height: 194px; }
.staged { min-height: 150px; }
.diff { min-height: 176px; display: flex; flex-direction: column; background: #fff; border: 1px solid #fff; border-left: 1px solid #9c9ca0; border-top: 1px solid #a6a8ae; padding-right: 1px; padding-bottom: 2px; }
.diff-head { height: 24px; margin-right: -2px; background: #ffd700; border-bottom: 1px solid #b0a878; }
.commit-area { display: flex; gap: 2px; min-height: 168px; }
.actions { width: 88px; display: flex; flex-direction: column; gap: 2px; padding-top: 19px; }
.push { height: 23px; border: 1px solid #707070; border-radius: 3px; background: linear-gradient(#f3f3f3 48%, #dedede 50%, #cfcfcf); box-shadow: inset 0 0 0 1px #fbfbfb; }
.commit { flex: 1; min-width: 0; display: flex; flex-direction: column; }
.commit-head { display: flex; align-items: center; gap: 4px; height: 20px; padding: 0 2px; }
.commit-head > label:first-child { margin-right: auto; }
.radio { display: flex; align-items: center; gap: 5px; white-space: nowrap; }
.radio input { appearance: none; width: 12px; height: 12px; margin: 0; border: 1px solid #7d8186; border-radius: 50%; background: radial-gradient(circle, #e8eaec 30%, #c4c8cc); box-shadow: inset 0 0 0 1px #f4f4f4; }
.radio input:checked { background: radial-gradient(circle at 45% 40%, #7fd0f4 10%, #1a6ea4 25%, #0c3450 42%, #dfe3e6 46%); }
.commit-box { flex: 1; display: flex; background: #fff; border: 1px solid #e3e6ea; border-top-color: #a6a8ae; padding: 1px 1px 1px 0; }
textarea { flex: 1; min-width: 0; border: 0; padding: 0; margin: 0; resize: none; outline: 0; background: #fff; color: #000; font: inherit; overflow: hidden; }

.sb { display: flex; background: #f1f1f1; }
.sb.v { width: 16px; flex-direction: column; background: linear-gradient(90deg, #e8e8e8, #f4f4f4 40%); }
.sb.h { height: 17px; background: linear-gradient(#e8e8e8, #f4f4f4 40%); }
.sb.h.flat { flex: 1; background: #ececec; }
.arr { width: 18px; height: 17px; display: grid; place-items: center; }
.sb.v .arr { width: 16px; height: 18px; }
.arr::before { content: ""; background: linear-gradient(135deg, #6e6e6e, #a8a8a8); }
.up::before { width: 8px; height: 4px; clip-path: polygon(0 100%, 50% 0, 100% 100%); }
.dn::before { width: 8px; height: 4px; clip-path: polygon(0 0, 100% 0, 50% 100%); }
.lf::before { width: 4px; height: 8px; clip-path: polygon(100% 0, 100% 100%, 0 50%); }
.rt::before { width: 4px; height: 8px; clip-path: polygon(0 0, 100% 50%, 0 100%); }
.gap { flex: 1; }
.thumb { flex: 1; border: 1px solid #949494; border-radius: 2px; box-shadow: inset 0 0 0 1px #f6f6f6; }
.v .thumb { width: 15px; background: linear-gradient(90deg, #f2f2f2, #e2e2e2 48%, #cdcdd0 50%, #bcbcc0); }
.h .thumb { height: 15px; margin-top: 1px; background: linear-gradient(#f2f2f2, #e2e2e2 48%, #cdcdd0 50%, #bcbcc0); }

.addressbar { display: flex; align-items: center; height: 30px; padding: 0 1px 0 2px; margin-bottom: 3px; }
.travel { display: flex; align-items: center; gap: 2px; width: 69px; }
.round, .round svg { width: 26px; height: 26px; }
.hist { width: 10px; height: 6px; }
.crumbs { flex: 1; min-width: 0; display: flex; align-items: center; height: 23px; padding-left: 2px; margin-right: 6px; border: 1px solid #7a848e; background: #f4f8fc; color: #4a545e; }
.tri { margin: 0 7px 0 8px; border: 4px solid transparent; border-left: 5px solid #111; border-right: 0; }
.drop { display: grid; place-items: center; margin-left: auto; width: 19px; color: #0a1c5c; }
.reload { width: 26px; height: 21px; display: grid; place-items: center; border-left: 1px solid #7a848e; }
.reload svg { width: 14px; height: 13px; }
.searchbox { width: 242px; height: 23px; display: flex; align-items: center; border: 1px solid #7a848e; background: #f7fafd; padding: 0 5px 0 8px; }
.searchbox input { flex: 1; min-width: 0; border: 0; background: none; outline: 0; font: inherit; padding: 0; }
.searchbox input::placeholder { color: #6d7278; font-style: italic; opacity: 1; }
.searchbox svg { width: 13px; height: 13px; }

.ex-client { background: #fcfcfc; }
.toolbar { display: flex; align-items: center; height: 32px; padding: 0 15px 0 18px; color: #1e395b; background: linear-gradient(#fafcfe, #eef3fb 48%, #dfe7f5 50%, #dce6f4); border-top: 1px solid #b9c9dd; border-bottom: 1px solid #a0afc7; }
.toolbar button { display: flex; align-items: center; gap: 3px; }
.toolbar .far { margin-left: 6px; }
.t-open { margin-left: 31px; }
.t-share { margin-left: 30px; }
.t-print { margin-left: 29px; }
.t-new { margin-left: 29px; }
.spacer { flex: 1; }
.vw { width: 16px; height: 13px; }
.pv { width: 16px; height: 14px; }
.t-prev { margin-left: 22px; }
.t-help { margin-left: 20px; }
.ex-body { display: flex; }
.sidebar { width: 159px; border-right: 1px solid #d6e5f5; padding: 9px 1px 14px; }
.sidebar ul { list-style: none; }
.sidebar ul + ul { margin-top: 21px; }
.sidebar a { display: flex; align-items: center; gap: 5px; height: 21px; padding-left: 28px; border: 1px solid transparent; border-radius: 3px; white-space: nowrap; }
.sidebar a.nav-head { padding-left: 18px; }
.sidebar a.selected { border-color: #d9d9d9; background: linear-gradient(#fafafa, #e6e6e6); }
.files { flex: 1; min-width: 0; background: radial-gradient(ellipse at 38% 0, #f3f6fc, rgba(252, 252, 252, 0) 110px); }
.lib-head { display: flex; justify-content: space-between; padding: 5px 36px 0 18px; height: 54px; }
.lib-head h2 { font-size: 18px; line-height: 24px; color: #0c6a22; white-space: nowrap; }
.lib-head p { color: #5f6b7c; }
.arrange { display: flex; align-items: center; gap: 12px; color: #5f6b7c; padding-bottom: 5px; }
.arrange button { color: #0066cc; }
.arrange .dn8 { margin: 0 0 3px 1px; }
table { width: 100%; border-spacing: 0; table-layout: fixed; padding-left: 15px; border-collapse: separate; }
.c-date, .c-type { width: 120px; }
.c-size { width: 80px; }
.c-rest { width: 24px; }
th { position: relative; height: 26px; padding: 0 6px; font-weight: 400; text-align: left; color: #5a6b84; border-top: 1px solid #dbe5f0; border-right: 1px solid #e4ebf3; }
th:first-child { padding-left: 3px; }
th:last-child { border-right: 0; }
.sort { position: absolute; left: 48%; top: 1px; width: 7px; height: 4px; }
thead::after { content: ""; display: block; height: 6px; }
td { height: 22px; padding: 0 6px; color: #6d6d6d; background: linear-gradient(#fafafa, #e6e6e6); border: solid #d9d9d9; border-width: 1px 0; }
td:first-child { padding-left: 4px; border-left-width: 1px; border-radius: 3px 0 0 3px; }
td.num { text-align: right; border-right-width: 1px; border-radius: 0 3px 3px 0; }
td:last-child { background: none; border: 0; }
.file { display: flex; align-items: center; gap: 5px; color: #000; }
.sheet16 { width: 14px; height: 16px; }
.details { display: flex; height: 54px; padding: 7px 24px; gap: 20px; background: #f0f4fc; border-top: 1px solid #ccd9ea; color: #5a6779; line-height: 18px; white-space: nowrap; }
.sheet { width: 33px; height: 41px; }
.d-name { display: flex; flex-direction: column; width: 65px; }
.d-name strong { font-weight: 400; color: #000; }
.details dl { display: grid; grid-template-columns: auto auto; column-gap: 4px; align-content: start; }
.details dt { text-align: right; }
.details dd { color: #1e395b; }
.details .d-created { margin-left: 28px; }

.np-client { padding-bottom: 1px; background: #e8edf6; }
.edit { margin: 1px 1px 0; border-top: 1px solid #3f7cac; background: #fff; }
.edit-main { position: relative; display: flex; min-height: 98px; padding: 1px 1px 0 0; }
.edit textarea { padding-left: 2px; font: 13px/13px "DejaVu Sans Mono", "Liberation Mono", monospace; white-space: pre; }
.caret { position: absolute; left: 2px; top: 2px; width: 1px; height: 13px; background: #000; }
.edit-foot { display: flex; background: #f0f0f0; }
.edit-foot .sb { margin-left: 1px; }
.grip { width: 9px; height: 9px; margin: 6px 2px 0 7px; }
.cursor { position: absolute; left: 334px; top: 119px; width: 13px; height: 20px; }

.taskbar {
  position: relative; display: flex; height: 40px; border-top: 1px solid #34495f;
  background: linear-gradient(90deg, #7f93ad 0, #8fa5c0 60px, #a5bfdc 120px, #a5bfdc 74%, #8496ac 79%, #8898ae);
  box-shadow: inset 0 1px 0 rgba(255, 255, 255, 0.5);
}
.start { width: 59px; display: grid; place-items: center; padding-right: 5px; }
.start svg { width: 36px; height: 36px; }
.task { height: 39px; display: grid; place-items: center; border: 1px solid #3f5268; border-radius: 3px; margin-right: 2px; background: linear-gradient(160deg, rgba(255, 255, 255, 0.6), rgba(255, 255, 255, 0.15) 55%, rgba(255, 255, 255, 0.35)); box-shadow: inset 0 0 0 1px rgba(255, 255, 255, 0.65); }
.task svg { width: 32px; height: 30px; }
.task .tb-git { width: 20px; height: 33px; }
.wide { width: 60px; }
.stacked { width: 52px; margin-right: 10px; box-shadow: inset 0 0 0 1px rgba(255, 255, 255, 0.65), 3px 0 0 -1px #b8cbe0, 4px 0 0 -1px #55687e, 7px 0 0 -2px #b8cbe0, 8px 0 0 -2px #55687e; }
.plain { border: 0; background: none; box-shadow: none; }
.active { background: linear-gradient(160deg, #fff, #d6e4f2 55%, #f0f6fb); }
.tray { display: flex; gap: 11px; align-items: center; margin-left: auto; padding: 0 161px 6px 0; color: #fff; }
.keys { width: 16px; height: 14px; }
.mosaic { position: absolute; right: 0; bottom: 0; width: 156px; height: 89px; }
</style>
